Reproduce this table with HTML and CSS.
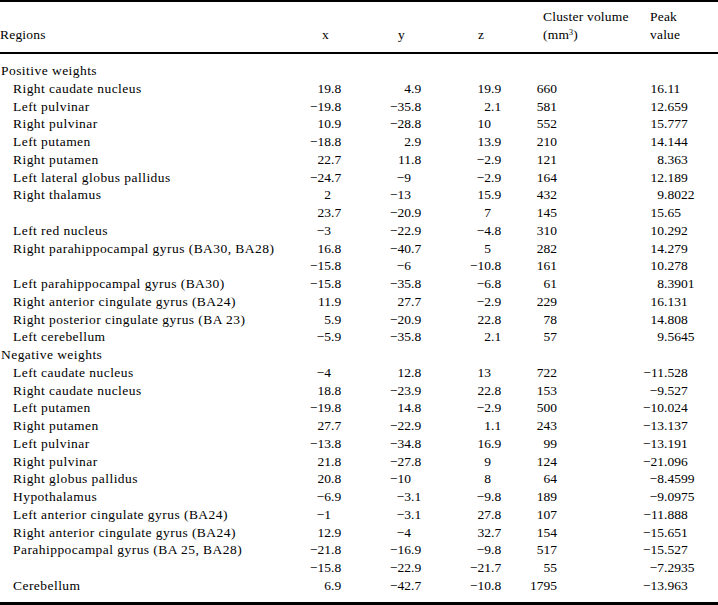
FILE: index.html
```html
<!DOCTYPE html>
<html lang="en">
<head>
<meta charset="utf-8">
<title>Regions table</title>
<link rel="stylesheet" href="styles.css">
</head>
<body>
<table class="data">
  <colgroup>
    <col class="c-region"><col class="c-x"><col class="c-y"><col class="c-z"><col class="c-vol"><col class="c-peak">
  </colgroup>
  <thead>
    <tr>
      <th class="h-region">Regions</th>
      <th class="h-x">x</th>
      <th class="h-y">y</th>
      <th class="h-z">z</th>
      <th class="h-vol">Cluster volume<br>(mm<sup>3</sup>)</th>
      <th class="h-peak">Peak<br>value</th>
    </tr>
  </thead>
  <tbody class="group group-pos">
    <tr class="label"><td colspan="6">Positive weights</td></tr>
    <tr><td class="r">Right caudate nucleus</td><td class="x"><span class="w">19</span>.8</td><td class="y"><span class="w">4</span>.9</td><td class="z"><span class="w">19</span>.9</td><td class="v"><span class="w">660</span></td><td class="p"><span class="w">16</span>.11</td></tr>
    <tr><td class="r">Left pulvinar</td><td class="x"><span class="w">−19</span>.8</td><td class="y"><span class="w">−35</span>.8</td><td class="z"><span class="w">2</span>.1</td><td class="v"><span class="w">581</span></td><td class="p"><span class="w">12</span>.659</td></tr>
    <tr><td class="r">Right pulvinar</td><td class="x"><span class="w">10</span>.9</td><td class="y"><span class="w">−28</span>.8</td><td class="z"><span class="w">10</span></td><td class="v"><span class="w">552</span></td><td class="p"><span class="w">15</span>.777</td></tr>
    <tr><td class="r">Left putamen</td><td class="x"><span class="w">−18</span>.8</td><td class="y"><span class="w">2</span>.9</td><td class="z"><span class="w">13</span>.9</td><td class="v"><span class="w">210</span></td><td class="p"><span class="w">14</span>.144</td></tr>
    <tr><td class="r">Right putamen</td><td class="x"><span class="w">22</span>.7</td><td class="y"><span class="w">11</span>.8</td><td class="z"><span class="w">−2</span>.9</td><td class="v"><span class="w">121</span></td><td class="p"><span class="w">8</span>.363</td></tr>
    <tr><td class="r">Left lateral globus pallidus</td><td class="x"><span class="w">−24</span>.7</td><td class="y"><span class="w">−9</span></td><td class="z"><span class="w">−2</span>.9</td><td class="v"><span class="w">164</span></td><td class="p"><span class="w">12</span>.189</td></tr>
    <tr><td class="r">Right thalamus</td><td class="x"><span class="w">2</span></td><td class="y"><span class="w">−13</span></td><td class="z"><span class="w">15</span>.9</td><td class="v"><span class="w">432</span></td><td class="p"><span class="w">9</span>.8022</td></tr>
    <tr><td class="r"></td><td class="x"><span class="w">23</span>.7</td><td class="y"><span class="w">−20</span>.9</td><td class="z"><span class="w">7</span></td><td class="v"><span class="w">145</span></td><td class="p"><span class="w">15</span>.65</td></tr>
    <tr><td class="r">Left red nucleus</td><td class="x"><span class="w">−3</span></td><td class="y"><span class="w">−22</span>.9</td><td class="z"><span class="w">−4</span>.8</td><td class="v"><span class="w">310</span></td><td class="p"><span class="w">10</span>.292</td></tr>
    <tr><td class="r">Right parahippocampal gyrus (BA30, BA28)</td><td class="x"><span class="w">16</span>.8</td><td class="y"><span class="w">−40</span>.7</td><td class="z"><span class="w">5</span></td><td class="v"><span class="w">282</span></td><td class="p"><span class="w">14</span>.279</td></tr>
    <tr><td class="r"></td><td class="x"><span class="w">−15</span>.8</td><td class="y"><span class="w">−6</span></td><td class="z"><span class="w">−10</span>.8</td><td class="v"><span class="w">161</span></td><td class="p"><span class="w">10</span>.278</td></tr>
    <tr><td class="r">Left parahippocampal gyrus (BA30)</td><td class="x"><span class="w">−15</span>.8</td><td class="y"><span class="w">−35</span>.8</td><td class="z"><span class="w">−6</span>.8</td><td class="v"><span class="w">61</span></td><td class="p"><span class="w">8</span>.3901</td></tr>
    <tr><td class="r">Right anterior cingulate gyrus (BA24)</td><td class="x"><span class="w">11</span>.9</td><td class="y"><span class="w">27</span>.7</td><td class="z"><span class="w">−2</span>.9</td><td class="v"><span class="w">229</span></td><td class="p"><span class="w">16</span>.131</td></tr>
    <tr><td class="r">Right posterior cingulate gyrus (BA 23)</td><td class="x"><span class="w">5</span>.9</td><td class="y"><span class="w">−20</span>.9</td><td class="z"><span class="w">22</span>.8</td><td class="v"><span class="w">78</span></td><td class="p"><span class="w">14</span>.808</td></tr>
    <tr><td class="r">Left cerebellum</td><td class="x"><span class="w">−5</span>.9</td><td class="y"><span class="w">−35</span>.8</td><td class="z"><span class="w">2</span>.1</td><td class="v"><span class="w">57</span></td><td class="p"><span class="w">9</span>.5645</td></tr>
  </tbody>
  <tbody class="group group-neg">
    <tr class="label"><td colspan="6">Negative weights</td></tr>
    <tr><td class="r">Left caudate nucleus</td><td class="x"><span class="w">−4</span></td><td class="y"><span class="w">12</span>.8</td><td class="z"><span class="w">13</span></td><td class="v"><span class="w">722</span></td><td class="p"><span class="w">−11</span>.528</td></tr>
    <tr><td class="r">Right caudate nucleus</td><td class="x"><span class="w">18</span>.8</td><td class="y"><span class="w">−23</span>.9</td><td class="z"><span class="w">22</span>.8</td><td class="v"><span class="w">153</span></td><td class="p"><span class="w">−9</span>.527</td></tr>
    <tr><td class="r">Left putamen</td><td class="x"><span class="w">−19</span>.8</td><td class="y"><span class="w">14</span>.8</td><td class="z"><span class="w">−2</span>.9</td><td class="v"><span class="w">500</span></td><td class="p"><span class="w">−10</span>.024</td></tr>
    <tr><td class="r">Right putamen</td><td class="x"><span class="w">27</span>.7</td><td class="y"><span class="w">−22</span>.9</td><td class="z"><span class="w">1</span>.1</td><td class="v"><span class="w">243</span></td><td class="p"><span class="w">−13</span>.137</td></tr>
    <tr><td class="r">Left pulvinar</td><td class="x"><span class="w">−13</span>.8</td><td class="y"><span class="w">−34</span>.8</td><td class="z"><span class="w">16</span>.9</td><td class="v"><span class="w">99</span></td><td class="p"><span class="w">−13</span>.191</td></tr>
    <tr><td class="r">Right pulvinar</td><td class="x"><span class="w">21</span>.8</td><td class="y"><span class="w">−27</span>.8</td><td class="z"><span class="w">9</span></td><td class="v"><span class="w">124</span></td><td class="p"><span class="w">−21</span>.096</td></tr>
    <tr><td class="r">Right globus pallidus</td><td class="x"><span class="w">20</span>.8</td><td class="y"><span class="w">−10</span></td><td class="z"><span class="w">8</span></td><td class="v"><span class="w">64</span></td><td class="p"><span class="w">−8</span>.4599</td></tr>
    <tr><td class="r">Hypothalamus</td><td class="x"><span class="w">−6</span>.9</td><td class="y"><span class="w">−3</span>.1</td><td class="z"><span class="w">−9</span>.8</td><td class="v"><span class="w">189</span></td><td class="p"><span class="w">−9</span>.0975</td></tr>
    <tr><td class="r">Left anterior cingulate gyrus (BA24)</td><td class="x"><span class="w">−1</span></td><td class="y"><span class="w">−3</span>.1</td><td class="z"><span class="w">27</span>.8</td><td class="v"><span class="w">107</span></td><td class="p"><span class="w">−11</span>.888</td></tr>
    <tr><td class="r">Right anterior cingulate gyrus (BA24)</td><td class="x"><span class="w">12</span>.9</td><td class="y"><span class="w">−4</span></td><td class="z"><span class="w">32</span>.7</td><td class="v"><span class="w">154</span></td><td class="p"><span class="w">−15</span>.651</td></tr>
    <tr><td class="r">Parahippocampal gyrus (BA 25, BA28)</td><td class="x"><span class="w">−21</span>.8</td><td class="y"><span class="w">−16</span>.9</td><td class="z"><span class="w">−9</span>.8</td><td class="v"><span class="w">517</span></td><td class="p"><span class="w">−15</span>.527</td></tr>
    <tr><td class="r"></td><td class="x"><span class="w">−15</span>.8</td><td class="y"><span class="w">−22</span>.9</td><td class="z"><span class="w">−21</span>.7</td><td class="v"><span class="w">55</span></td><td class="p"><span class="w">−7</span>.2935</td></tr>
    <tr><td class="r">Cerebellum</td><td class="x"><span class="w">6</span>.9</td><td class="y"><span class="w">−42</span>.7</td><td class="z"><span class="w">−10</span>.8</td><td class="v"><span class="w">1795</span></td><td class="p"><span class="w">−13</span>.963</td></tr>
  </tbody>
</table>
</body>
</html>
```
FILE: styles.css
```css
html, body {
  margin: 0;
  padding: 0;
  background: #fff;
}

body {
  font-family: "Liberation Serif", "Times New Roman", serif;
  font-size: 13.5px;
  color: #000;
}

.data {
  width: 718px;
  table-layout: fixed;
  border-collapse: separate;
  border-spacing: 0;
  border-top: 2px solid #000;
  border-bottom: 3px solid #000;
}

.c-region { width: 305px; }
.c-x { width: 80px; }
.c-y { width: 80px; }
.c-z { width: 65px; }
.c-vol { width: 105px; }
.c-peak { width: 83px; }

.data th {
  font-weight: normal;
  text-align: left;
  vertical-align: bottom;
  line-height: 18px;
  padding: 6px 0 8px 0;
  border-bottom: 2px solid #000;
  letter-spacing: 0.2px;
  white-space: nowrap;
}

.data th sup {
  font-size: 8px;
  line-height: 0;
  vertical-align: 4px;
}

.h-region { padding-left: 0; }
.data .h-x { padding-left: 17px; }
.data .h-y { padding-left: 13px; }
.data .h-z { padding-left: 13px; }
.data .h-vol { padding-left: 13px; }
.data .h-peak { padding-left: 15px; }

.data td {
  padding: 0;
  line-height: 17.75px;
  height: 17.75px;
  white-space: nowrap;
}

.group-pos .label td { padding-top: 8px; }
.group-neg tr:last-child td { padding-bottom: 7.5px; }

.label td {
  padding-left: 1px;
  letter-spacing: 0.45px;
}

.data .r {
  padding-left: 13px;
  letter-spacing: 0.45px;
}

.w {
  display: inline-block;
  text-align: right;
}

.x { padding-left: 4px; }
.x .w { width: 26px; }

.y { padding-left: 2px; }
.y .w { width: 26px; }

.z { padding-left: 1px; }
.z .w { width: 26px; }

.v { padding-left: 13px; }
.v .w { width: 27px; }

.p { padding-left: 0; }
.p .w { width: 29px; }
```
